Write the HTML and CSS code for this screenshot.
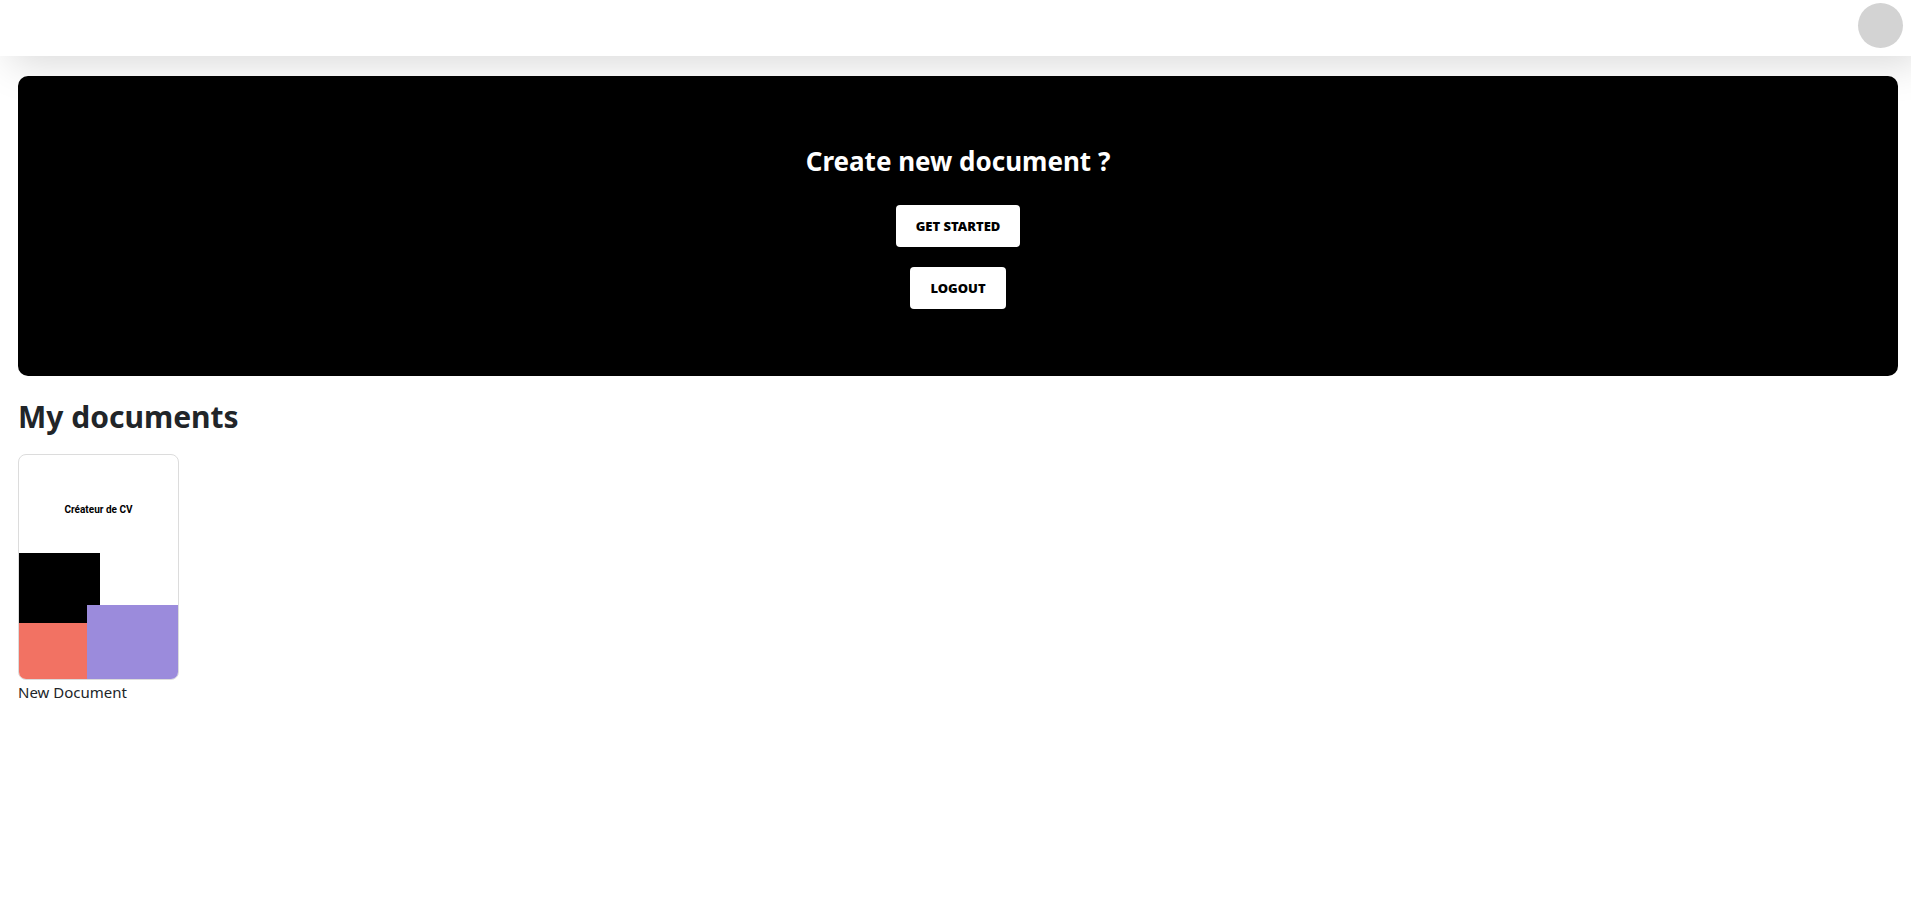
FILE: index.html
```html
<!DOCTYPE html>
<html lang="en">
<head>
<meta charset="utf-8">
<title>My documents</title>
<link rel="stylesheet" href="styles.css">
</head>
<body>
<header class="topbar">
  <button class="avatar" type="button" aria-label="Account"></button>
</header>
<main class="content">
  <section class="hero">
    <h2 class="hero-title">Create new document ?</h2>
    <button class="hero-button" type="button">GET STARTED</button>
    <button class="hero-button" type="button">LOGOUT</button>
  </section>
  <h1 class="section-title">My documents</h1>
  <div class="documents">
    <a class="document" href="#">
      <span class="cover">
        <svg class="cover-shapes" viewBox="0 0 159 224" preserveAspectRatio="none" aria-hidden="true">
          <rect x="0" y="98" width="81" height="70" fill="#000"/>
          <rect x="0" y="168" width="69" height="56" fill="#f27263"/>
          <rect x="68" y="150" width="91" height="74" fill="#9b8bdc"/>
        </svg>
        <span class="cover-title">Créateur de CV</span>
      </span>
      <span class="document-name">New Document</span>
    </a>
  </div>
</main>
</body>
</html>
```
FILE: styles.css
```css
* {
  box-sizing: border-box;
}

body {
  margin: 0;
  background: #fff;
  color: #212529;
  font-family: "Segoe UI", "Noto Sans", "Open Sans", sans-serif;
  font-size: 15px;
  line-height: 24px;
}

.topbar {
  position: relative;
  display: flex;
  justify-content: flex-end;
  height: 56px;
  padding: 3px 8px;
  background: #fff;
  box-shadow: 10px 8px 40px rgba(0, 0, 0, 0.15);
}

.avatar {
  width: 45px;
  height: 45px;
  padding: 0;
  border: 0;
  border-radius: 50%;
  background: #d3d3d3;
}

.content {
  padding: 20px 13px 20px 18px;
}

.hero {
  display: flex;
  flex-direction: column;
  align-items: center;
  gap: 20px;
  padding: 67px 20px;
  border-radius: 10px;
  background: #000;
}

.hero-title {
  margin: 0 0 6px;
  color: #fff;
  font-size: 26px;
  font-weight: 700;
  line-height: 36px;
}

.hero-button {
  height: 42px;
  padding: 0 20px;
  border: 0;
  border-radius: 4px;
  background: #fff;
  color: #000;
  font-family: inherit;
  font-size: 13px;
  font-weight: 900;
}

.section-title {
  margin: 20px 0 16px;
  font-size: 30px;
  font-weight: 700;
  line-height: 42px;
}

.documents {
  display: flex;
  flex-wrap: wrap;
  gap: 20px;
}

.document {
  display: flex;
  flex-direction: column;
  width: 161px;
  color: inherit;
  text-decoration: none;
}

.cover {
  display: grid;
  aspect-ratio: 161 / 226;
  overflow: hidden;
  border: 1px solid #dcdcdc;
  border-radius: 8px;
}

.cover-shapes,
.cover-title {
  grid-area: 1 / 1;
}

.cover-shapes {
  width: 100%;
  height: 100%;
}

.cover-title {
  padding-top: 48px;
  color: #000;
  font-family: Roboto, sans-serif;
  font-size: 10px;
  font-weight: 700;
  line-height: 14px;
  text-align: center;
}
```
